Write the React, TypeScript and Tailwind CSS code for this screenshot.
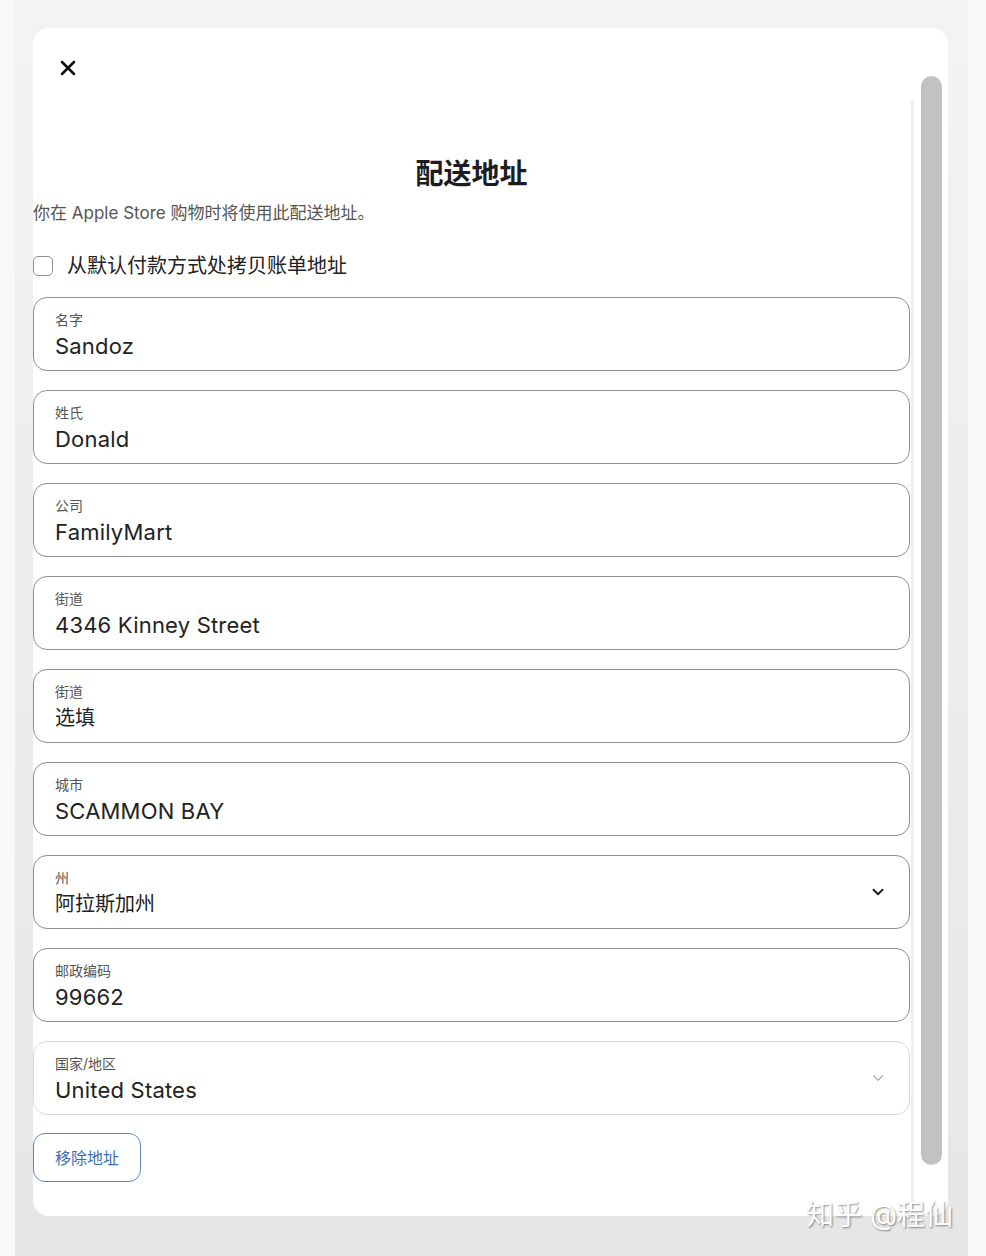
import React, { FC } from "react";
import { ChevronDown } from "lucide-react";

interface Field {
  label: string;
  value: string;
  select?: boolean;
  muted?: boolean;
  cjk?: boolean;
}

const fields: Field[] = [
  { label: "名字", value: "Sandoz" },
  { label: "姓氏", value: "Donald" },
  { label: "公司", value: "FamilyMart" },
  { label: "街道", value: "4346 Kinney Street" },
  { label: "街道", value: "选填", cjk: true },
  { label: "城市", value: "SCAMMON BAY" },
  { label: "州", value: "阿拉斯加州", select: true, cjk: true },
  { label: "邮政编码", value: "99662" },
  { label: "国家/地区", value: "United States", select: true, muted: true },
];

const font = { fontFamily: '"Inter", "Noto Sans CJK SC", sans-serif' };

const FieldBox: FC<{ field: Field }> = ({ field }) => (
  <div
    className={
      "flex items-center h-[74px] rounded-[14px] border-[1.5px] bg-white pl-[21px] pr-[22px] " +
      (field.muted ? "border-[#d9d9d9]" : "border-[#8e8e8e]")
    }
  >
    <div className="flex flex-col flex-1 pt-[3px]">
      <span className="text-[14px] leading-[16px] text-[#555]">{field.label}</span>
      <span
        className={
          "mt-[5px] leading-[26px] text-[#222] " +
          (field.cjk ? "text-[20px]" : "text-[22px] tracking-[0.2px]")
        }
      >
        {field.value}
      </span>
    </div>
    {field.select && (
      <ChevronDown
        size={18}
        strokeWidth={field.muted ? 1.5 : 2.5}
        className={field.muted ? "text-[#a8a8a8]" : "text-[#1d1d1f]"}
      />
    )}
  </div>
);

const App: FC = () => {
  return (
    <div className="relative w-[986px] h-[1256px] bg-[#f8f8f8] pl-[15px] pr-[18px] overflow-hidden" style={font}>
      <div className="h-full bg-gradient-to-b from-[#f3f3f3] to-[#e6e6e6] pt-[28px] pl-[18px] pr-[20px]">
        <div className="flex h-[1188px] bg-white rounded-2xl overflow-hidden">
          <div className="flex flex-col w-[877px]">
            <div className="h-[80px] pt-[32px] pl-[27px]">
              <svg width="16" height="16" viewBox="0 0 16 16">
                <path d="M2 2 L14 14 M14 2 L2 14" stroke="#111" strokeWidth="2.6" strokeLinecap="round" />
              </svg>
            </div>
            <h1 className="mt-[46px] text-center text-[28px] leading-[40px] font-bold text-[#1d1d1f]">配送地址</h1>
            <p className="mt-[7px] text-[17px] leading-[24px] text-[#555]">你在 Apple Store 购物时将使用此配送地址。</p>
            <label className="mt-[29px] flex items-center h-[24px] gap-[14px]">
              <span className="w-[20px] h-[20px] rounded-[5px] border border-[#8e8e8e] bg-white" />
              <span className="text-[20px] leading-[24px] text-[#222]">从默认付款方式处拷贝账单地址</span>
            </label>
            <div className="mt-[19px] flex flex-col gap-[19px]">
              {fields.map((f, i) => (
                <FieldBox key={i} field={f} />
              ))}
            </div>
            <button className="mt-[18px] self-start w-[108px] h-[49px] rounded-xl border-[1.5px] border-[#5b87c7] text-[16px] text-[#3b6fb6]">
              移除地址
            </button>
          </div>
          <div className="flex w-[38px]">
            <div className="ml-[1px] mt-[72px] w-[3px] h-full bg-[#efefef]" />
            <div className="ml-[7px] mt-[48px] w-[21px] h-[1089px] rounded-full bg-[#c2c2c2]" />
          </div>
        </div>
      </div>
      <div
        className="absolute left-[806px] top-[1197px] text-[28px] leading-[36px] text-white"
        style={{ textShadow: "1px 1px 2px rgba(0,0,0,0.45)" }}
      >
        知乎 @程仙
      </div>
    </div>
  );
};

export default App;
